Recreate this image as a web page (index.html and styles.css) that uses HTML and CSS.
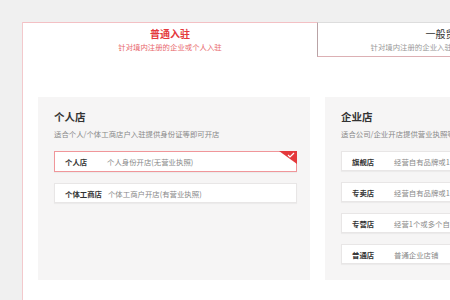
FILE: index.html
```html
<!doctype html>
<html>
  <head>
    <meta charset="utf-8">
    <title>入驻类型</title>
    <link rel="stylesheet" href="styles.css">
  </head>
  <body>
    <div class="page">
      <div class="main">
        <div class="tabs">
          <div class="tab active">
            <div class="tab-title">普通入驻</div>
            <div class="tab-sub">针对境内注册的企业或个人入驻</div>
          </div>
          <div class="tab">
            <div class="tab-title">一般贸易入驻</div>
            <div class="tab-sub">针对境内注册的企业入驻，经营国内生产的品牌商品</div>
          </div>
        </div>

        <div class="content">
          <div class="panel">
            <div class="panel-title">个人店</div>
            <div class="panel-sub">适合个人/个体工商店户入驻提供身份证等即可开店</div>
            <div class="option selected">
              <span class="opt-name">个人店</span>
              <span class="opt-desc">个人身份开店(无营业执照)</span>
              <span class="corner">
                <svg width="8" height="6" viewBox="0 0 8 6"><path d="M1 3 L3 5 L7 1" fill="none" stroke="#fff" stroke-width="1.2"/></svg>
              </span>
            </div>
            <div class="option">
              <span class="opt-name">个体工商店</span>
              <span class="opt-desc">个体工商户开店(有营业执照)</span>
            </div>
          </div>

          <div class="panel">
            <div class="panel-title">企业店</div>
            <div class="panel-sub">适合公司/企业开店提供营业执照等资质即可开店</div>
            <div class="option">
              <span class="opt-name">旗舰店</span>
              <span class="opt-desc">经营自有品牌或1个一级独占授权品牌</span>
            </div>
            <div class="option">
              <span class="opt-name">专卖店</span>
              <span class="opt-desc">经营自有品牌或1个授权销售品牌</span>
            </div>
            <div class="option">
              <span class="opt-name">专营店</span>
              <span class="opt-desc">经营1个或多个自有或他人品牌</span>
            </div>
            <div class="option">
              <span class="opt-name">普通店</span>
              <span class="opt-desc">普通企业店铺</span>
            </div>
          </div>
        </div>
      </div>
    </div>
  </body>
</html>
```

FILE: styles.css
```css
html, body {
  margin: 0;
  height: 100%;
  overflow: hidden;
}
body {
  background: #f0f0f0;
  font-family: "Noto Sans CJK SC", "Noto Sans", sans-serif;
}
.page {
  padding: 22px 0 0 22px;
  height: 100%;
  box-sizing: border-box;
}
.main {
  background: #fff;
  border-left: 1px solid #f3c9cc;
  height: 100%;
  width: 900px;
}
.tabs {
  display: flex;
}
.tab {
  box-sizing: border-box;
  height: 35px;
  width: 276px;
  text-align: center;
  border-top: 1px solid #ddd;
  border-left: 1px solid #b9a3a6;
  border-bottom: 1px solid #dcb0b4;
  background: #fff;
  flex: none;
}
.tab.active {
  width: 294px;
  border: none;
  border-top: 1px solid #f3c0c4;
}
.tab-title {
  font-size: 10px;
  line-height: 14px;
  margin-top: 4px;
  color: #333;
}
.tab-sub {
  font-size: 7.4px;
  line-height: 10px;
  margin-top: 1px;
  color: #999;
  white-space: nowrap;
}
.tab.active .tab-title {
  color: #e4393c;
  font-weight: bold;
}
.tab.active .tab-sub {
  color: #e8676c;
}
.content {
  display: flex;
  gap: 15px;
  padding: 40px 0 0 15px;
}
.panel {
  flex: none;
  width: 272px;
  height: 183px;
  box-sizing: border-box;
  background: #f6f5f5;
  padding: 13px 13px 0 16px;
}
.panel-title {
  font-size: 10.5px;
  line-height: 14px;
  font-weight: bold;
  color: #333;
}
.panel-sub {
  font-size: 7.4px;
  line-height: 10px;
  margin-top: 5px;
  color: #888;
  white-space: nowrap;
}
.option {
  position: relative;
  display: flex;
  align-items: center;
  box-sizing: border-box;
  height: 20px;
  margin-top: 12px;
  padding-left: 10px;
  background: #fff;
  border: 1px solid #e8e6e6;
  box-shadow: 0 1px 1px rgba(0, 0, 0, 0.04);
  font-size: 7.4px;
  white-space: nowrap;
}
.panel .option:first-of-type {
  margin-top: 12px;
}
.option.selected {
  height: 21px;
  border-color: #f0969a;
}
.option + .option {
  margin-top: 11px;
}
.opt-name {
  min-width: 36px;
  margin-right: 6px;
  font-weight: bold;
  color: #333;
}
.opt-desc {
  color: #888;
}
.corner {
  position: absolute;
  top: -1px;
  right: -1px;
  width: 0;
  height: 0;
  border-top: 13px solid #e4393c;
  border-left: 18px solid transparent;
}
.corner svg {
  position: absolute;
  top: -12px;
  right: 2px;
}
```
